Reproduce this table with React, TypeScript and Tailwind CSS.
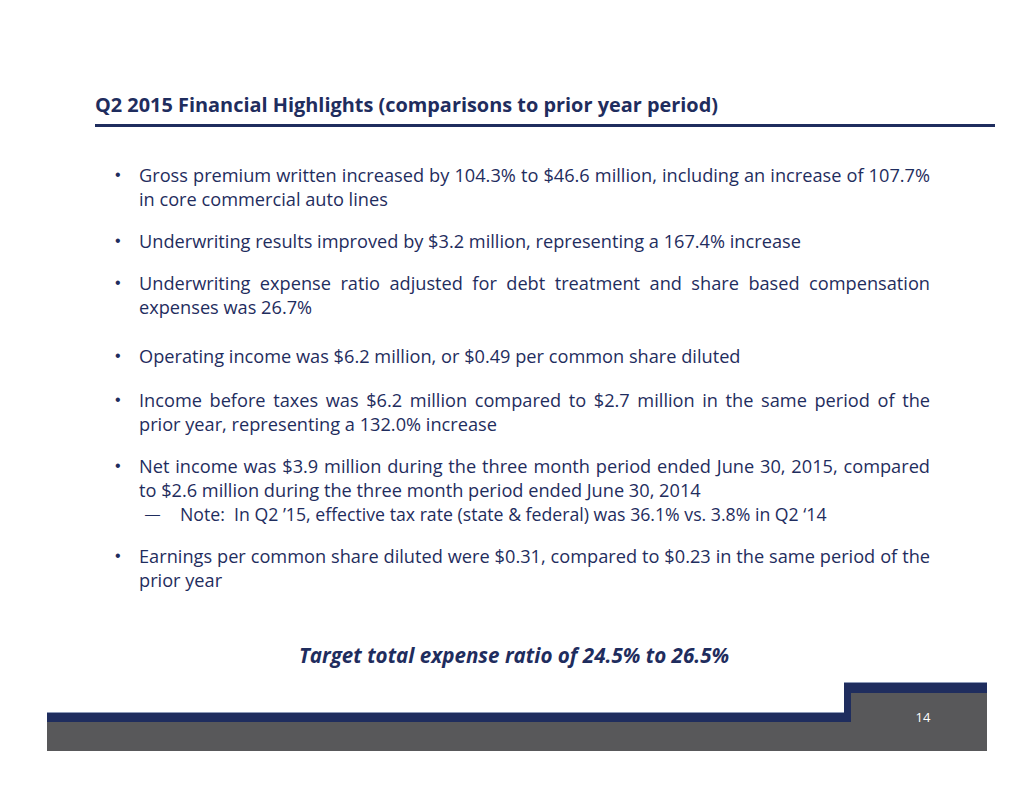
import React from 'react';

const navy = 'text-[#1f2d5e]';

const bullets: { text: string; gap: string; sub?: string }[] = [
  { text: 'Gross premium written increased by 104.3% to $46.6 million, including an increase of 107.7% in core commercial auto lines', gap: 'mt-0' },
  { text: 'Underwriting results improved by $3.2 million, representing a 167.4% increase', gap: 'mt-[18px]' },
  { text: 'Underwriting expense ratio adjusted for debt treatment and share based compensation expenses was 26.7%', gap: 'mt-[18px]' },
  { text: 'Operating income was $6.2 million, or $0.49 per common share diluted', gap: 'mt-[25px]' },
  { text: 'Income before taxes was $6.2 million compared to $2.7 million in the same period of the prior year, representing a 132.0% increase', gap: 'mt-[20px]' },
  {
    text: 'Net income was $3.9 million during the three month period ended June 30, 2015, compared to $2.6 million during the three month period ended June 30, 2014',
    gap: 'mt-[18px]',
    sub: 'Note:\u00a0 In Q2 \u201915, effective tax rate (state & federal) was 36.1% vs. 3.8% in Q2 \u201814',
  },
  { text: 'Earnings per common share diluted were $0.31, compared to $0.23 in the same period of the prior year', gap: 'mt-[18px]' },
];

export default function App() {
  return (
    <div className="flex h-[799px] w-[1034px] flex-col bg-white font-['Open_Sans',sans-serif]">
      <div className="pl-[95px] pr-[39px] pt-[91px]">
        <h1 className={`h-[28px] text-[19.9px] font-bold leading-[28px] ${navy}`}>
          Q2 2015 Financial Highlights (comparisons to prior year period)
        </h1>
        <div className="mt-[5px] h-[3px] bg-[#1f2d5e]" />
      </div>

      <ul className={`mt-[36px] pl-[115px] pr-[104px] text-[18.2px] leading-[24px] ${navy}`}>
        {bullets.map((b) => (
          <li key={b.text} className={`flex ${b.gap}`}>
            <span className="w-[24px] shrink-0 font-['Liberation_Sans',sans-serif] text-[16px]">•</span>
            <div className="flex-1">
              <p className="text-justify">{b.text}</p>
              {b.sub && (
                <div className="flex text-[17.7px]">
                  <span className="ml-[6px] w-[35px] shrink-0 font-['Liberation_Sans',sans-serif] text-[15px]">—</span>
                  <p>{b.sub}</p>
                </div>
              )}
            </div>
          </li>
        ))}
      </ul>

      <p className={`mt-[49px] h-[28px] pr-[6px] text-center text-[20.6px] font-bold italic leading-[28px] ${navy}`}>
        Target total expense ratio of 24.5% to 26.5%
      </p>

      <div className="ml-[47px] mt-[13px] flex h-[69px] w-[940px]">
        <div className="flex flex-1 flex-col justify-end">
          <div className="h-[10px] border-t border-[#8d9ab8] bg-[#1f2d5e]" />
          <div className="h-[29px] bg-[#58585a]" />
        </div>
        <div className="flex w-[143px] flex-col bg-[#58585a]">
          <div className="h-[11px] border-t border-[#8d9ab8] bg-[#1f2d5e]" />
          <div className="flex h-[29px]">
            <div className="w-[7px] bg-[#1f2d5e]" />
            <span className="flex flex-1 items-center justify-center pl-[8px] pt-[20px] text-[13px] text-white">14</span>
          </div>
        </div>
      </div>
    </div>
  );
}
